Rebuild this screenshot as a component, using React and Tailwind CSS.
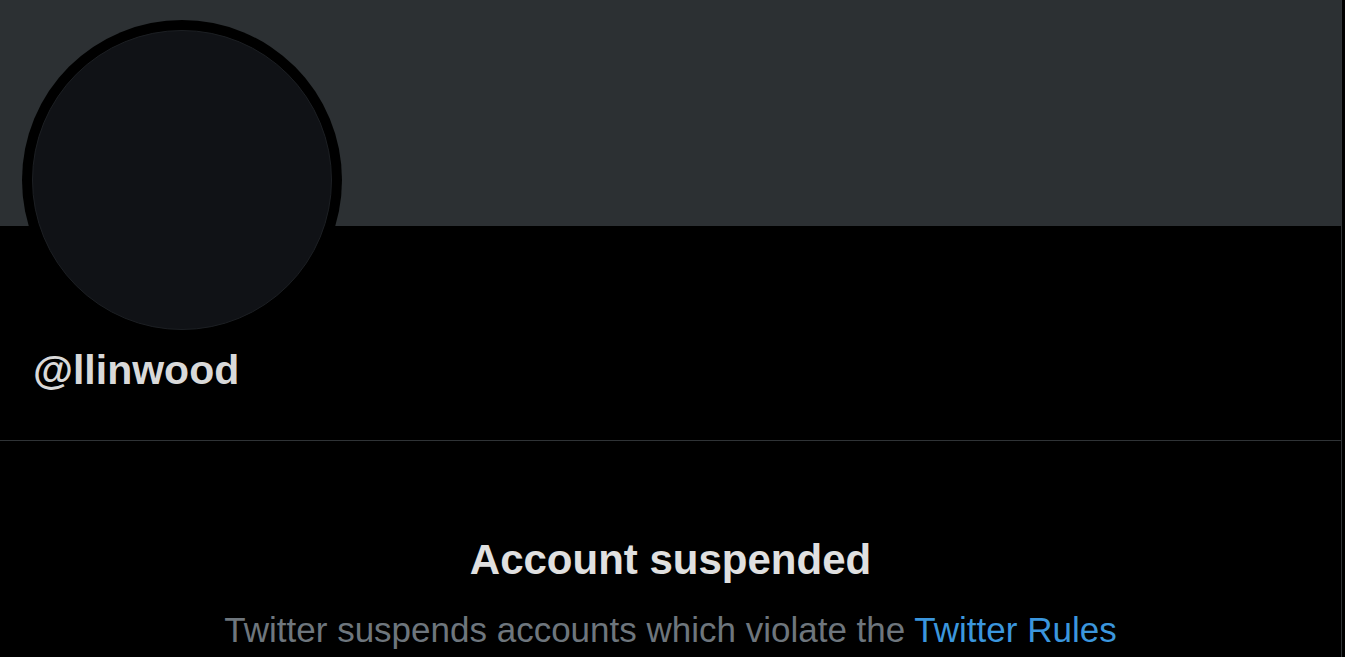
export default function App() {
  return (
    <div className="min-h-[657px] w-full overflow-hidden bg-black font-['Liberation_Sans',Arial,sans-serif]">
      <div className="w-[1342px] min-h-[657px] border-r border-[#2f3336]">
        {/* banner */}
        <div className="h-[226px] bg-[#2c3033]"></div>

        {/* avatar + handle */}
        <div className="px-[22px] border-b border-[#2f3336] pb-[46px]">
          <div className="-mt-[206px] w-[320px] h-[320px] rounded-full bg-black p-[10px]">
            <div className="w-full h-full rounded-full bg-[#101216] border border-[#1c1f23]"></div>
          </div>
          <div className="mt-[6px] pl-[11px] text-[41px] leading-[48px] font-bold text-[#d9d9d9]">
            @llinwood
          </div>
        </div>

        {/* suspended notice */}
        <div className="flex flex-col items-center pt-[95px]">
          <h2 className="text-[42px] leading-[48px] font-bold text-[#e0e0e0]">
            Account suspended
          </h2>
          <p className="mt-[26px] text-[35px] leading-[40px] text-[#6e767d]">
            Twitter suspends accounts which violate the{" "}
            <a href="#" className="text-[#3b96dd]">
              Twitter Rules
            </a>
          </p>
        </div>
      </div>
    </div>
  );
}
